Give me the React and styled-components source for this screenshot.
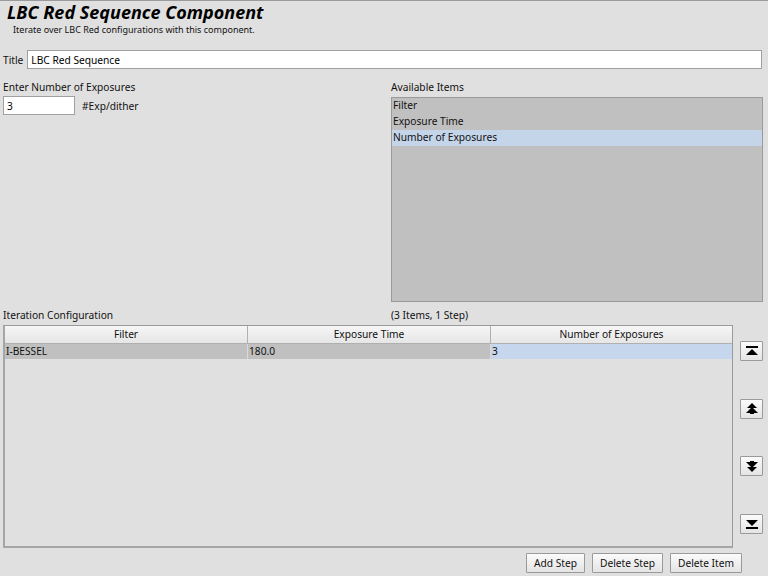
import React from 'react'
import styled, { createGlobalStyle } from 'styled-components'

const GlobalStyle = createGlobalStyle`
  html, body {
    margin: 0;
    padding: 0;
    background: #e0e0e0;
  }
  body {
    font-family: "Noto Sans", "DejaVu Sans", sans-serif;
    font-size: 10.2px;
    color: #111;
  }
`

const availableItems = ['Filter', 'Exposure Time', 'Number of Exposures']
const columns = ['Filter', 'Exposure Time', 'Number of Exposures']
const rows = [['I-BESSEL', '180.0', '3']]

// Move buttons next to the table
const MoveIcon = ({ kind }) => {
  return (
    <svg width="12" height="12" viewBox="0 0 12 12">
      {kind === 'top' && (
        <>
          <rect x="0" y="1" width="12" height="2" fill="#000" />
          <path d="M6 4 L12 10 L0 10 Z" fill="#000" />
        </>
      )}
      {kind === 'up' && (
        <>
          <path d="M6 0 L11 5 L1 5 Z" fill="#000" />
          <path d="M6 4 L12 10 L0 10 Z" fill="#000" />
          <rect x="4" y="9" width="4" height="2" fill="#000" />
        </>
      )}
      {kind === 'down' && (
        <>
          <rect x="4" y="1" width="4" height="2" fill="#000" />
          <path d="M0 2 L12 2 L6 8 Z" fill="#000" />
          <path d="M1 7 L11 7 L6 12 Z" fill="#000" />
        </>
      )}
      {kind === 'bottom' && (
        <>
          <path d="M0 2 L12 2 L6 8 Z" fill="#000" />
          <rect x="0" y="9" width="12" height="2" fill="#000" />
        </>
      )}
    </svg>
  )
}

const App = () => {
  return (
    <Page>
      <GlobalStyle />
      <Heading>LBC Red Sequence Component</Heading>
      <Subtitle>Iterate over LBC Red configurations with this component.</Subtitle>

      <TitleRow>
        <Label>Title</Label>
        <TextInput defaultValue="LBC Red Sequence" />
      </TitleRow>

      <TwoCols>
        <Column>
          <Label>Enter Number of Exposures</Label>
          <ExpRow>
            <SmallInput defaultValue="3" />
            <Label>#Exp/dither</Label>
          </ExpRow>
        </Column>
        <Column>
          <Label>Available Items</Label>
          <ListBox>
            {availableItems.map((item, i) => (
              <ListItem key={item} selected={i === 2}>
                {item}
              </ListItem>
            ))}
          </ListBox>
        </Column>
      </TwoCols>

      <SectionLabels>
        <Label>Iteration Configuration</Label>
        <Label>(3 Items, 1 Step)</Label>
      </SectionLabels>

      <TableArea>
        <Table>
          <HeaderRow>
            {columns.map((c) => (
              <HeaderCell key={c}>{c}</HeaderCell>
            ))}
          </HeaderRow>
          {rows.map((r) => (
            <DataRow key={r[0]}>
              {r.map((v, i) => (
                <DataCell key={i} focused={i === 2}>
                  {v}
                </DataCell>
              ))}
            </DataRow>
          ))}
        </Table>
        <MoveColumn>
          <IconButton>
            <MoveIcon kind="top" />
          </IconButton>
          <IconButton>
            <MoveIcon kind="up" />
          </IconButton>
          <IconButton>
            <MoveIcon kind="down" />
          </IconButton>
          <IconButton>
            <MoveIcon kind="bottom" />
          </IconButton>
        </MoveColumn>
      </TableArea>

      <ButtonRow>
        <Button>Add Step</Button>
        <Button>Delete Step</Button>
        <Button>Delete Item</Button>
      </ButtonRow>
    </Page>
  )
}

const Page = styled.div`
  border-top: 1px solid #9a9a9a;
  padding: 0 5px 0 3px;
  height: 575px;
  box-sizing: border-box;
`

const Heading = styled.h1`
  margin: 0;
  padding-left: 4px;
  font-size: 18px;
  line-height: 22px;
  font-weight: bold;
  font-style: italic;
  color: #000;
`

const Subtitle = styled.div`
  padding-left: 10px;
  font-size: 9px;
  line-height: 14px;
`

const Label = styled.span`
  line-height: 14px;
  white-space: nowrap;
`

const TitleRow = styled.div`
  display: flex;
  align-items: center;
  gap: 4px;
  margin-top: 13px;
  padding-right: 1px;
`

const TextInput = styled.input`
  flex: 1;
  height: 19px;
  box-sizing: border-box;
  border: 1px solid #a0a0a0;
  background: #fff;
  font: inherit;
  padding: 0 3px;
  outline: none;
`

const TwoCols = styled.div`
  display: grid;
  grid-template-columns: 388px 1fr;
  margin-top: 11px;
`

const Column = styled.div`
  display: flex;
  flex-direction: column;
`

const ExpRow = styled.div`
  display: flex;
  align-items: center;
  gap: 7px;
  margin-top: 2px;
`

const SmallInput = styled(TextInput)`
  flex: none;
  width: 72px;
`

const ListBox = styled.div`
  margin-top: 3px;
  height: 205px;
  box-sizing: border-box;
  border: 1px solid #9a9a9a;
  background: #c0c0c0;
`

const ListItem = styled.div`
  height: 16px;
  line-height: 15px;
  padding-left: 1px;
  background: ${(p) => (p.selected ? '#c5d5e9' : 'transparent')};
`

const SectionLabels = styled.div`
  display: grid;
  grid-template-columns: 388px 1fr;
  margin-top: 6px;
`

const TableArea = styled.div`
  display: flex;
  gap: 7px;
  margin-top: 3px;
  height: 223px;
`

const Table = styled.div`
  width: 730px;
  box-sizing: border-box;
  border: 1px solid #9a9a9a;
  border-left: 2px solid #a6a6a6;
  border-bottom: 2px solid #a6a6a6;
`

const HeaderRow = styled.div`
  display: grid;
  grid-template-columns: 243px 243px 1fr;
  height: 17px;
  border-bottom: 1px solid #b0b0b0;
  background: linear-gradient(#f6f6f6, #e6e6e6);
`

const HeaderCell = styled.div`
  text-align: center;
  line-height: 17px;
  border-right: 1px solid #b0b0b0;
  &:last-child {
    border-right: none;
  }
`

const DataRow = styled.div`
  display: grid;
  grid-template-columns: 243px 243px 1fr;
  height: 15px;
`

const DataCell = styled.div`
  line-height: 15px;
  padding-left: 1px;
  background: ${(p) => (p.focused ? '#c6d6ec' : '#c0c0c0')};
  border-right: 1px solid #d8d8d8;
  &:last-child {
    border-right: none;
  }
`

const MoveColumn = styled.div`
  display: flex;
  flex-direction: column;
  justify-content: space-between;
  padding: 16px 0 14px;
`

const IconButton = styled.button`
  width: 23px;
  height: 20px;
  padding: 0;
  display: flex;
  align-items: center;
  justify-content: center;
  border: 1px solid #9a9a9a;
  border-radius: 1px;
  background: linear-gradient(#fbfbfb, #e4e4e4);
`

const ButtonRow = styled.div`
  display: flex;
  justify-content: flex-end;
  gap: 7px;
  margin-top: 5px;
  padding-right: 21px;
`

const Button = styled.button`
  height: 20px;
  padding: 0 7px;
  font: inherit;
  color: #111;
  border: 1px solid #9a9a9a;
  border-radius: 1px;
  background: linear-gradient(#fbfbfb, #e4e4e4);
`

export default App
